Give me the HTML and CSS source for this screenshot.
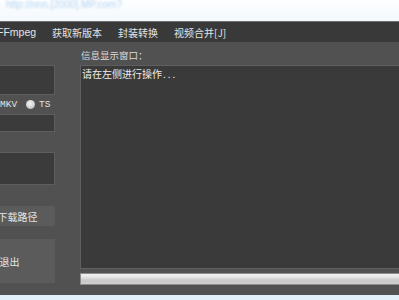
FILE: index.html
```html
<!DOCTYPE html>
<html lang="zh">
<head>
<meta charset="utf-8">
<link rel="stylesheet" href="styles.css">
</head>
<body>
<div class="desk-top"><span class="url">http://nnn.[2000].MP.com?</span></div>
<div class="window">
  <div class="menubar">
    <span class="menu-item first">FFmpeg</span>
    <span class="menu-item">获取新版本</span>
    <span class="menu-item">封装转换</span>
    <span class="menu-item">视频合并[J]</span>
  </div>
  <div class="content">
    <div class="left">
      <div class="box box1"></div>
      <div class="radio-row">
        <span class="opt">MKV</span>
        <span class="radio"></span>
        <span class="opt">TS</span>
      </div>
      <div class="box box2"></div>
      <div class="box box3"></div>
      <div class="btn btn-path">下载路径</div>
      <div class="btn btn-exit">退出</div>
    </div>
    <div class="right">
      <div class="label">信息显示窗口：</div>
      <div class="log">请在左侧进行操作<span class="dots">...</span></div>
      <div class="progress"></div>
    </div>
  </div>
</div>
<div class="desk-bottom"></div>
</body>
</html>
```
FILE: styles.css
```css
html, body {
  margin: 0;
  padding: 0;
}
body {
  width: 399px;
  height: 300px;
  overflow: hidden;
  background: #f6fbfe;
  font-family: "Noto Sans CJK SC", "Noto Sans", sans-serif;
}
.desk-top {
  height: 21px;
  background: linear-gradient(#fdfeff, #f3f9fd);
  overflow: hidden;
}
.url {
  display: block;
  padding: 0 0 0 6px;
  font-family: "Liberation Sans", sans-serif;
  font-size: 10px;
  color: #b4d4f0;
  filter: blur(1.3px);
  line-height: 10px;
}
.window {
  height: 274px;
  background: #515151;
  display: flex;
  flex-direction: column;
}
.menubar {
  height: 20px;
  border-top: 1px solid #6e6e6e;
  background: #393939;
  display: flex;
  align-items: center;
  gap: 16px;
  font-size: 10px;
  color: #e4e4e4;
  white-space: nowrap;
}
.menu-item.first {
  font-family: "Liberation Sans", sans-serif;
  font-size: 10.5px;
  margin-left: -3px;
}
.content {
  flex: 1;
  display: flex;
  overflow: hidden;
}
.left {
  margin-left: -30px;
  width: 85px;
  flex: none;
  display: flex;
  flex-direction: column;
}
.box {
  background: #3b3b3b;
  border: 1px solid #5e5e5e;
  box-sizing: border-box;
}
.box1 {
  margin-top: 23px;
  height: 30px;
}
.radio-row {
  height: 19px;
  display: flex;
  align-items: center;
  padding-left: 30px;
  font-family: "Liberation Mono", monospace;
  font-size: 9.5px;
  color: #e2e2e2;
}
.radio {
  width: 9px;
  height: 9px;
  border-radius: 50%;
  margin: 0 4px 0 9px;
  background: radial-gradient(circle at 45% 40%, #f4f4f4 0, #d6d6d6 50%, #9a9a9a 100%);
}
.box2 {
  height: 18px;
}
.box3 {
  margin-top: 20px;
  height: 33px;
}
.btn {
  background: #5b5b5b;
  color: #e6e6e6;
  font-size: 10px;
  display: flex;
  align-items: center;
  justify-content: center;
  white-space: nowrap;
}
.btn-path {
  margin-top: 21px;
  height: 20px;
  padding-left: 10px;
}
.btn-exit {
  margin-top: 13px;
  height: 44px;
  padding-right: 6px;
}
.right {
  margin-left: 25px;
  flex: 1;
  display: flex;
  flex-direction: column;
}
.label {
  height: 23px;
  line-height: 14px;
  padding: 6px 0 0 1px;
  box-sizing: border-box;
  font-size: 9.5px;
  color: #dcdcdc;
}
.log {
  height: 204px;
  box-sizing: border-box;
  background: #3a3a3a;
  border: 1px solid #5f5f5f;
  border-right: none;
  padding: 1px 0 0 1px;
  font-size: 10px;
  line-height: 14px;
  color: #eeeeee;
}
.dots {
  letter-spacing: 2px;
  margin-left: 1px;
}
.progress {
  margin-top: 4px;
  height: 10px;
  border: 1px solid #8c8c8c;
  border-right: none;
  background: linear-gradient(#f2f2f2 0, #e6e6e6 30%, #c9c9c9 60%, #cfcfcf 100%);
}
.desk-bottom {
  height: 5px;
  background: #e3f2fa;
}
```
